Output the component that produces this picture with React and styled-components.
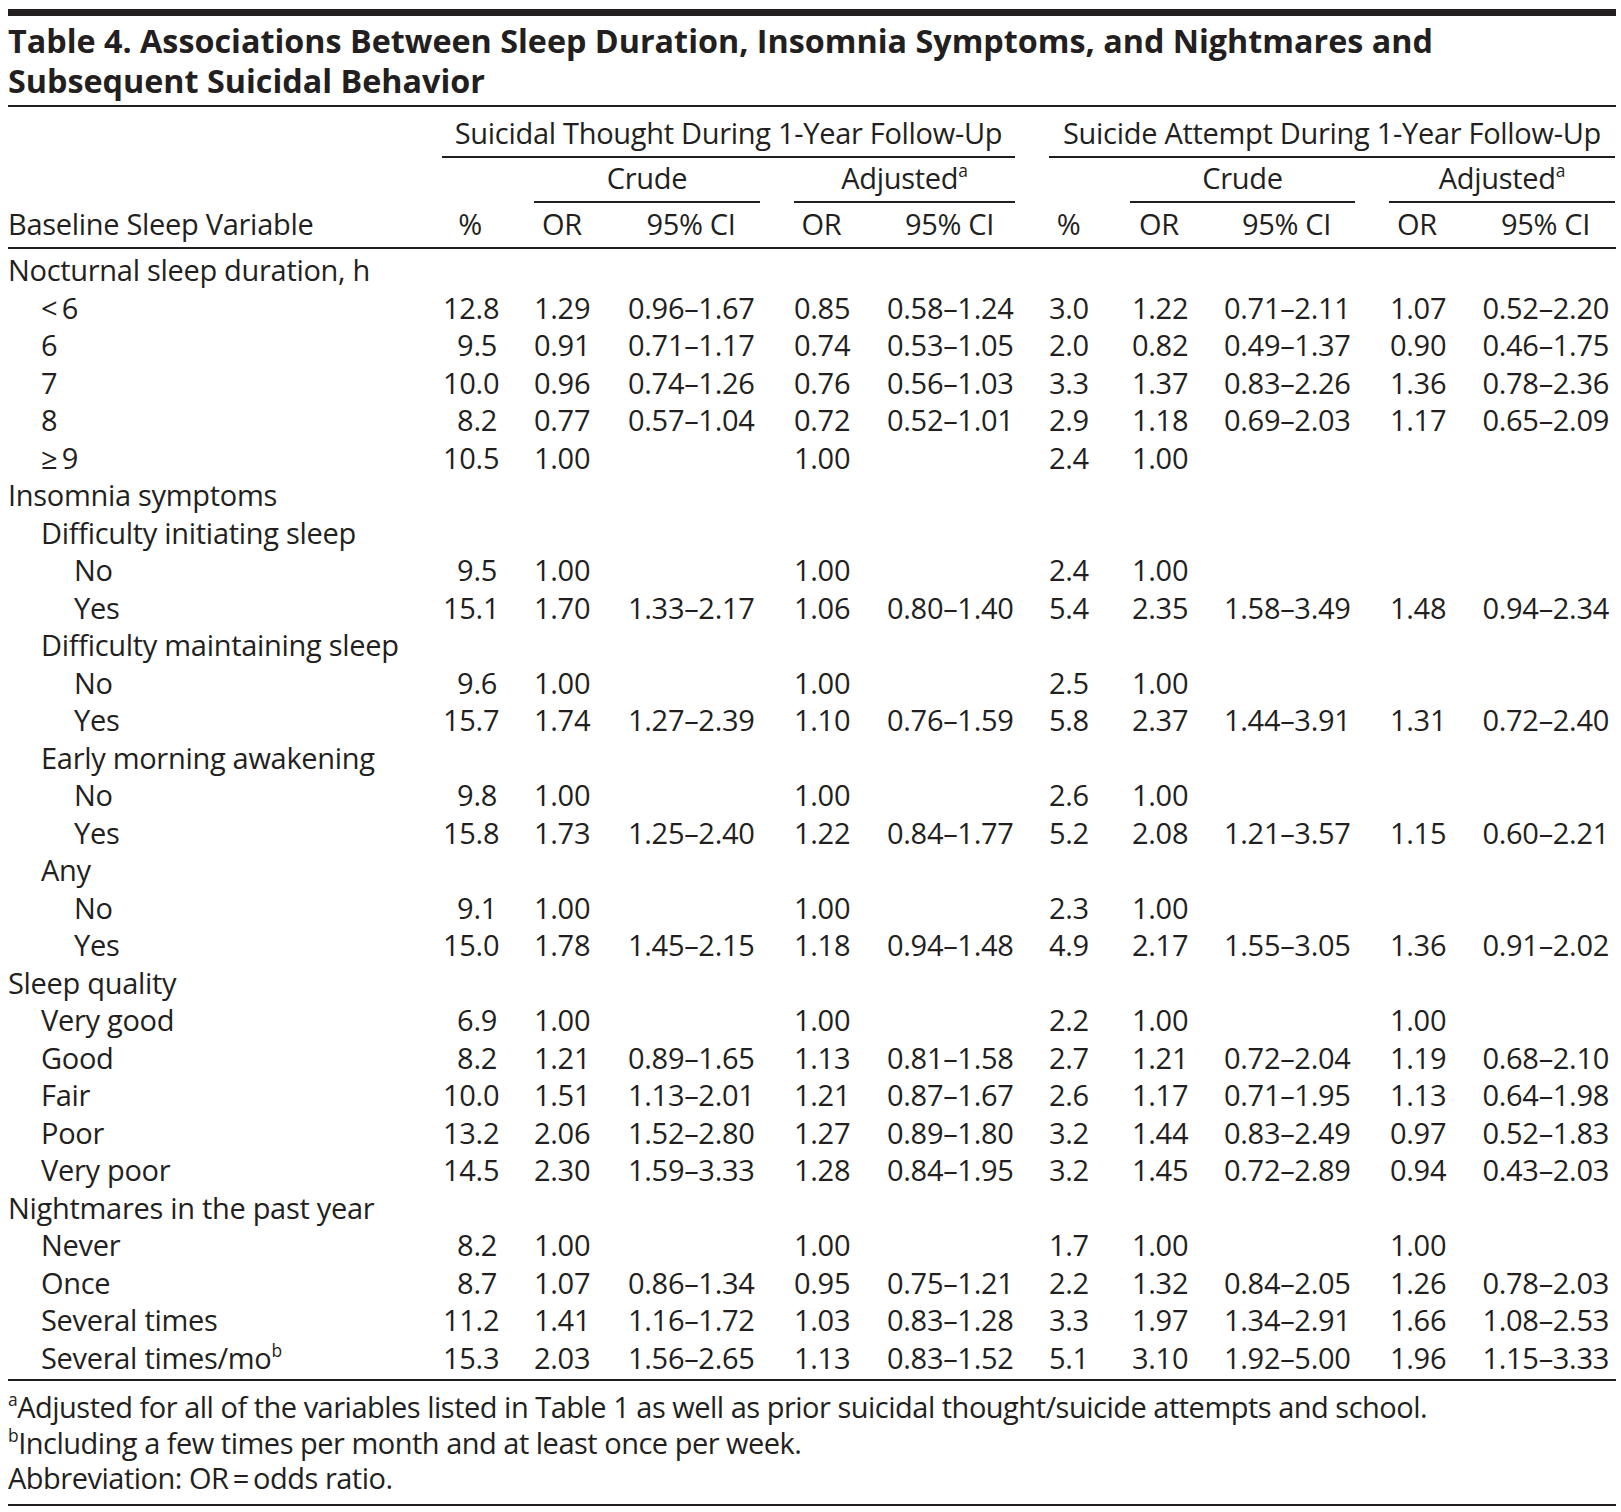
import styled, { createGlobalStyle } from "styled-components";

const GlobalStyle = createGlobalStyle`
  body {
    margin: 0;
    background: #ffffff;
    color: #231f20;
    font-family: "Open Sans", "Liberation Sans", sans-serif;
  }
`;

// column widths and the padding that puts each number box where the printed table has it
const cols = [
  { w: 434 },
  { w: 74, pl: 1, pr: 19 },
  { w: 93, pl: 18, pr: 19 },
  { w: 165, pl: 19, pr: 20 },
  { w: 94, pl: 20, pr: 19 },
  { w: 162, pl: 19, pr: 18 },
  { w: 80, pl: 19, pr: 22 },
  { w: 95, pl: 22, pr: 19 },
  { w: 164, pl: 19, pr: 20 },
  { w: 94, pl: 21, pr: 19 },
  { w: 153, pl: 19, pr: 7 },
];

const rows = [
  { label: "Nocturnal sleep duration, h", level: 0 },
  { label: "<\u20096", level: 1, v: ["12.8", "1.29", "0.96–1.67", "0.85", "0.58–1.24", "3.0", "1.22", "0.71–2.11", "1.07", "0.52–2.20"] },
  { label: "6", level: 1, v: ["9.5", "0.91", "0.71–1.17", "0.74", "0.53–1.05", "2.0", "0.82", "0.49–1.37", "0.90", "0.46–1.75"] },
  { label: "7", level: 1, v: ["10.0", "0.96", "0.74–1.26", "0.76", "0.56–1.03", "3.3", "1.37", "0.83–2.26", "1.36", "0.78–2.36"] },
  { label: "8", level: 1, v: ["8.2", "0.77", "0.57–1.04", "0.72", "0.52–1.01", "2.9", "1.18", "0.69–2.03", "1.17", "0.65–2.09"] },
  { label: "≥\u20099", level: 1, v: ["10.5", "1.00", "", "1.00", "", "2.4", "1.00", "", "", ""] },
  { label: "Insomnia symptoms", level: 0 },
  { label: "Difficulty initiating sleep", level: 1 },
  { label: "No", level: 2, v: ["9.5", "1.00", "", "1.00", "", "2.4", "1.00", "", "", ""] },
  { label: "Yes", level: 2, v: ["15.1", "1.70", "1.33–2.17", "1.06", "0.80–1.40", "5.4", "2.35", "1.58–3.49", "1.48", "0.94–2.34"] },
  { label: "Difficulty maintaining sleep", level: 1 },
  { label: "No", level: 2, v: ["9.6", "1.00", "", "1.00", "", "2.5", "1.00", "", "", ""] },
  { label: "Yes", level: 2, v: ["15.7", "1.74", "1.27–2.39", "1.10", "0.76–1.59", "5.8", "2.37", "1.44–3.91", "1.31", "0.72–2.40"] },
  { label: "Early morning awakening", level: 1 },
  { label: "No", level: 2, v: ["9.8", "1.00", "", "1.00", "", "2.6", "1.00", "", "", ""] },
  { label: "Yes", level: 2, v: ["15.8", "1.73", "1.25–2.40", "1.22", "0.84–1.77", "5.2", "2.08", "1.21–3.57", "1.15", "0.60–2.21"] },
  { label: "Any", level: 1 },
  { label: "No", level: 2, v: ["9.1", "1.00", "", "1.00", "", "2.3", "1.00", "", "", ""] },
  { label: "Yes", level: 2, v: ["15.0", "1.78", "1.45–2.15", "1.18", "0.94–1.48", "4.9", "2.17", "1.55–3.05", "1.36", "0.91–2.02"] },
  { label: "Sleep quality", level: 0 },
  { label: "Very good", level: 1, v: ["6.9", "1.00", "", "1.00", "", "2.2", "1.00", "", "1.00", ""] },
  { label: "Good", level: 1, v: ["8.2", "1.21", "0.89–1.65", "1.13", "0.81–1.58", "2.7", "1.21", "0.72–2.04", "1.19", "0.68–2.10"] },
  { label: "Fair", level: 1, v: ["10.0", "1.51", "1.13–2.01", "1.21", "0.87–1.67", "2.6", "1.17", "0.71–1.95", "1.13", "0.64–1.98"] },
  { label: "Poor", level: 1, v: ["13.2", "2.06", "1.52–2.80", "1.27", "0.89–1.80", "3.2", "1.44", "0.83–2.49", "0.97", "0.52–1.83"] },
  { label: "Very poor", level: 1, v: ["14.5", "2.30", "1.59–3.33", "1.28", "0.84–1.95", "3.2", "1.45", "0.72–2.89", "0.94", "0.43–2.03"] },
  { label: "Nightmares in the past year", level: 0 },
  { label: "Never", level: 1, v: ["8.2", "1.00", "", "1.00", "", "1.7", "1.00", "", "1.00", ""] },
  { label: "Once", level: 1, v: ["8.7", "1.07", "0.86–1.34", "0.95", "0.75–1.21", "2.2", "1.32", "0.84–2.05", "1.26", "0.78–2.03"] },
  { label: "Several times", level: 1, v: ["11.2", "1.41", "1.16–1.72", "1.03", "0.83–1.28", "3.3", "1.97", "1.34–2.91", "1.66", "1.08–2.53"] },
  { label: "Several times/mo", sup: "b", level: 1, v: ["15.3", "2.03", "1.56–2.65", "1.13", "0.83–1.52", "5.1", "3.10", "1.92–5.00", "1.96", "1.15–3.33"] },
];

const colHeads = ["%", "OR", "95% CI", "OR", "95% CI", "%", "OR", "95% CI", "OR", "95% CI"];

const Frame = styled.div`
  width: 1608px;
  margin: 0 0 0 8px;
  padding-top: 9px;
  font-size: 29px;
  letter-spacing: -0.3px;
`;

const TopBar = styled.div`
  height: 7px;
  background: #231f20;
`;

const Title = styled.h1`
  margin: 4px 0 0;
  padding-bottom: 5px;
  border-bottom: 2px solid #231f20;
  font-size: 32.3px;
  line-height: 40px;
  font-weight: 700;
  letter-spacing: 0;
`;

const Table = styled.div`
  display: grid;
  grid-template-columns: ${cols.map((c) => `${c.w}px`).join(" ")};
  border-bottom: 2px solid #231f20;
  padding-bottom: 3px;
`;

const GroupHead = styled.div`
  grid-column: ${(p) => p.$col} / span ${(p) => p.$span};
  padding-top: ${(p) => p.$pt}px;
  margin: 0 ${(p) => p.$mr}px 0 ${(p) => p.$ml}px;
`;

const GroupLabel = styled.div`
  line-height: 37.5px;
  padding-bottom: ${(p) => p.$pb}px;
  border-bottom: 2px solid #231f20;
  text-align: center;
  white-space: nowrap;
`;

const ColHead = styled.div`
  line-height: 37.5px;
  padding: 2px ${(p) => p.$pr}px 4.5px ${(p) => p.$pl}px;
  border-bottom: 2px solid #231f20;
  text-align: ${(p) => (p.$left ? "left" : "center")};
  white-space: nowrap;
`;

const LabelCell = styled.div`
  line-height: 37.5px;
  height: 37.5px;
  padding-left: ${(p) => p.$level * 33}px;
  white-space: nowrap;
  margin-top: ${(p) => (p.$first ? 2 : 0)}px;
`;

const NumCell = styled.div`
  line-height: 37.5px;
  height: 37.5px;
  padding: 0 ${(p) => p.$pr}px 0 ${(p) => p.$pl}px;
  text-align: right;
  white-space: nowrap;
  margin-top: ${(p) => (p.$first ? 2 : 0)}px;
`;

const Sup = styled.sup`
  font-size: 0.6em;
  line-height: 0;
  vertical-align: 0.7em;
`;

const Notes = styled.div`
  padding: 8px 0 8px;
  border-bottom: 2px solid #231f20;
  line-height: 35.5px;
  letter-spacing: -0.5px;
`;

const Note = styled.p`
  margin: 0;
  white-space: nowrap;
`;

export default function App() {
  return (
    <>
      <GlobalStyle />
      <Frame>
        <TopBar />
        <Title>
          Table 4. Associations Between Sleep Duration, Insomnia Symptoms, and Nightmares and
          <br />
          Subsequent Suicidal Behavior
        </Title>
        <Table>
          <GroupHead $col={2} $span={5} $pt={7} $ml={0} $mr={15}>
            <GroupLabel $pb={4}>Suicidal Thought During 1-Year Follow-Up</GroupLabel>
          </GroupHead>
          <GroupHead $col={7} $span={5} $pt={7} $ml={19} $mr={1}>
            <GroupLabel $pb={4}>Suicide Attempt During 1-Year Follow-Up</GroupLabel>
          </GroupHead>

          <GroupHead $col={3} $span={2} $pt={1} $ml={18} $mr={14}>
            <GroupLabel $pb={5}>Crude</GroupLabel>
          </GroupHead>
          <GroupHead $col={5} $span={2} $pt={1} $ml={20} $mr={15}>
            <GroupLabel $pb={5}>
              Adjusted<Sup>a</Sup>
            </GroupLabel>
          </GroupHead>
          <GroupHead $col={8} $span={2} $pt={1} $ml={20} $mr={14}>
            <GroupLabel $pb={5}>Crude</GroupLabel>
          </GroupHead>
          <GroupHead $col={10} $span={2} $pt={1} $ml={20} $mr={1}>
            <GroupLabel $pb={5}>
              Adjusted<Sup>a</Sup>
            </GroupLabel>
          </GroupHead>

          <ColHead $left $pl={0} $pr={0}>
            Baseline Sleep Variable
          </ColHead>
          {colHeads.map((h, i) => (
            <ColHead key={i} $pl={cols[i + 1].pl} $pr={cols[i + 1].pr}>
              {h}
            </ColHead>
          ))}

          {rows.map((r, ri) => [
            <LabelCell key={`l${ri}`} $level={r.level} $first={ri === 0}>
              {r.label}
              {r.sup && <Sup>{r.sup}</Sup>}
            </LabelCell>,
            ...cols.slice(1).map((c, ci) => (
              <NumCell key={`c${ri}-${ci}`} $pl={c.pl} $pr={c.pr} $first={ri === 0}>
                {r.v ? r.v[ci] : ""}
              </NumCell>
            )),
          ])}
        </Table>
        <Notes>
          <Note>
            <Sup>a</Sup>Adjusted for all of the variables listed in Table 1 as well as prior suicidal
            thought/suicide attempts and school.
          </Note>
          <Note>
            <Sup>b</Sup>Including a few times per month and at least once per week.
          </Note>
          <Note>Abbreviation: OR{"\u2009=\u2009"}odds ratio.</Note>
        </Notes>
      </Frame>
    </>
  );
}
